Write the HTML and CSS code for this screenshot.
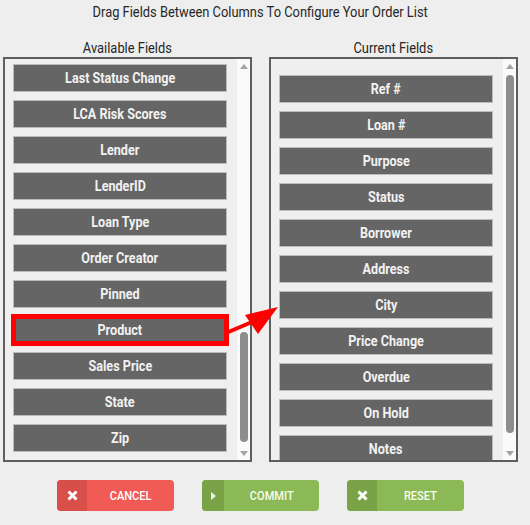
FILE: index.html
```html
<!DOCTYPE html>
<html lang="en">
<head>
<meta charset="utf-8">
<title>Configure Order List</title>
<link rel="stylesheet" href="styles.css">
</head>
<body>
<div class="wrap">
  <h1 class="title"><span class="sx">Drag Fields Between Columns To Configure Your Order List</span></h1>
  <div class="columns">
    <section class="col">
      <h2 class="col-title"><span class="sx">Available Fields</span></h2>
      <div class="panel">
        <ul class="list bottom">
          <li class="item"><span class="sx">Last Status Change</span></li>
          <li class="item"><span class="sx">LCA Risk Scores</span></li>
          <li class="item"><span class="sx">Lender</span></li>
          <li class="item"><span class="sx">LenderID</span></li>
          <li class="item"><span class="sx">Loan Type</span></li>
          <li class="item"><span class="sx">Order Creator</span></li>
          <li class="item"><span class="sx">Pinned</span></li>
          <li class="item selected"><span class="sx">Product</span></li>
          <li class="item"><span class="sx">Sales Price</span></li>
          <li class="item"><span class="sx">State</span></li>
          <li class="item"><span class="sx">Zip</span></li>
        </ul>
        <div class="scrollbar">
          <div class="sb-btn sb-up"></div>
          <div class="sb-track"><div class="sb-thumb" style="margin-top:259px;height:110px"></div></div>
          <div class="sb-btn sb-down"></div>
        </div>
      </div>
    </section>
    <section class="col">
      <h2 class="col-title"><span class="sx">Current Fields</span></h2>
      <div class="panel">
        <ul class="list">
          <li class="item"><span class="sx">Ref #</span></li>
          <li class="item"><span class="sx">Loan #</span></li>
          <li class="item"><span class="sx">Purpose</span></li>
          <li class="item"><span class="sx">Status</span></li>
          <li class="item"><span class="sx">Borrower</span></li>
          <li class="item"><span class="sx">Address</span></li>
          <li class="item"><span class="sx">City</span></li>
          <li class="item"><span class="sx">Price Change</span></li>
          <li class="item"><span class="sx">Overdue</span></li>
          <li class="item"><span class="sx">On Hold</span></li>
          <li class="item"><span class="sx">Notes</span></li>
        </ul>
        <div class="scrollbar">
          <div class="sb-btn sb-up"></div>
          <div class="sb-track"><div class="sb-thumb" style="margin-top:2px;height:358px"></div></div>
          <div class="sb-btn sb-down"></div>
        </div>
      </div>
    </section>
  </div>
  <div class="actions">
    <button class="btn btn-cancel">
      <span class="btn-icon"><svg width="11" height="11" viewBox="0 0 11 11"><path d="M1.5 1.5L9.5 9.5M9.5 1.5L1.5 9.5" stroke="#fff" stroke-width="3" fill="none"/></svg></span>
      <span class="btn-label"><span class="sx">CANCEL</span></span>
    </button>
    <button class="btn btn-commit">
      <span class="btn-icon narrow"><svg width="5" height="8" viewBox="0 0 5 8"><polygon points="0,0 5,4 0,8" fill="#eef4e4"/></svg></span>
      <span class="btn-label"><span class="sx">COMMIT</span></span>
    </button>
    <button class="btn btn-reset">
      <span class="btn-icon"><svg width="11" height="11" viewBox="0 0 11 11"><path d="M1.5 1.5L9.5 9.5M9.5 1.5L1.5 9.5" stroke="#fff" stroke-width="3" fill="none"/></svg></span>
      <span class="btn-label"><span class="sx">RESET</span></span>
    </button>
  </div>
</div>
<svg class="annot" width="530" height="525" viewBox="0 0 530 525">
  <line x1="226" y1="333" x2="252" y2="322" stroke="#ff0000" stroke-width="4"/>
  <polygon points="278,307 245,315 258,334" fill="#ff0000"/>
</svg>
</body>
</html>
```
FILE: styles.css
```css
html, body {
  margin: 0;
  padding: 0;
}
body {
  position: relative;
  width: 530px;
  height: 525px;
  overflow: hidden;
  background: #eeeeee;
  font-family: Roboto, "Noto Sans", "Liberation Sans", sans-serif;
  color: #222;
}
.wrap {
  width: 515px;
  margin-left: 3px;
  padding-top: 4px;
}
.sx {
  display: inline-block;
  transform: scaleX(0.85);
  white-space: nowrap;
}
.title {
  margin: 0;
  height: 16px;
  line-height: 16px;
  font-size: 14px;
  font-weight: 400;
  text-align: center;
  color: #262626;
}
.title .sx,
.col-title .sx {
  transform: scaleX(0.92);
}
.columns {
  display: flex;
  gap: 17px;
  margin-top: 20px;
}
.col {
  width: 249px;
}
.col-title {
  margin: 0 0 1px;
  height: 16px;
  line-height: 16px;
  font-size: 14px;
  font-weight: 400;
  text-align: center;
  color: #262626;
}
.panel {
  height: 405px;
  box-sizing: border-box;
  border: 2px solid #5e5e5e;
  background: #efefef;
  display: flex;
}
.list {
  list-style: none;
  margin: 0;
  padding: 16px 10px 8px 8px;
  flex: 1;
  min-width: 0;
  overflow: hidden;
  display: flex;
  flex-direction: column;
  gap: 8px;
}
.list.bottom {
  justify-content: flex-end;
}
.item {
  flex: none;
  height: 28px;
  box-sizing: border-box;
  border: 1px solid #bcbcbc;
  background: #656565;
  color: #f2f2f2;
  font-size: 14px;
  font-weight: 700;
  line-height: 26px;
  text-align: center;
}
.item .sx {
  transform: scaleX(0.9);
}
.item.selected {
  outline: 5px solid #ff0000;
  outline-offset: -3px;
}
.scrollbar {
  width: 13px;
  flex: none;
  background: #fafafa;
  display: flex;
  flex-direction: column;
}
.sb-btn {
  height: 14px;
  flex: none;
  display: flex;
  align-items: center;
  justify-content: center;
}
.sb-up::before {
  content: "";
  width: 0;
  height: 0;
  border-left: 4px solid transparent;
  border-right: 4px solid transparent;
  border-bottom: 5px solid #a3a3a3;
}
.sb-down::before {
  content: "";
  width: 0;
  height: 0;
  border-left: 4px solid transparent;
  border-right: 4px solid transparent;
  border-top: 5px solid #a3a3a3;
}
.sb-track {
  flex: 1;
  display: flex;
  flex-direction: column;
}
.sb-thumb {
  width: 8px;
  margin-left: auto;
  margin-right: auto;
  border-radius: 4px;
  background: #8d8d8d;
  flex: none;
}
.actions {
  display: flex;
  justify-content: center;
  gap: 28px;
  margin-top: 18px;
}
.btn {
  width: 117px;
  height: 31px;
  padding: 0;
  border: 0;
  border-radius: 4px;
  overflow: hidden;
  display: flex;
  font-family: Roboto, "Noto Sans", sans-serif;
  font-size: 13px;
  font-weight: 500;
  color: #fff;
}
.btn-icon {
  width: 30px;
  flex: none;
  display: flex;
  align-items: center;
  justify-content: center;
}
.btn-icon.narrow {
  width: 22px;
}
.btn-label {
  flex: 1;
  display: flex;
  align-items: center;
  justify-content: center;
}
.btn-cancel {
  background: #f05b56;
}
.btn-cancel .btn-icon {
  background: #d84f4a;
}
.btn-commit,
.btn-reset {
  background: #8bb955;
  color: #f6fbef;
}
.btn-commit .btn-icon,
.btn-reset .btn-icon {
  background: #79a346;
}
.annot {
  position: absolute;
  left: 0;
  top: 0;
  pointer-events: none;
}
```
